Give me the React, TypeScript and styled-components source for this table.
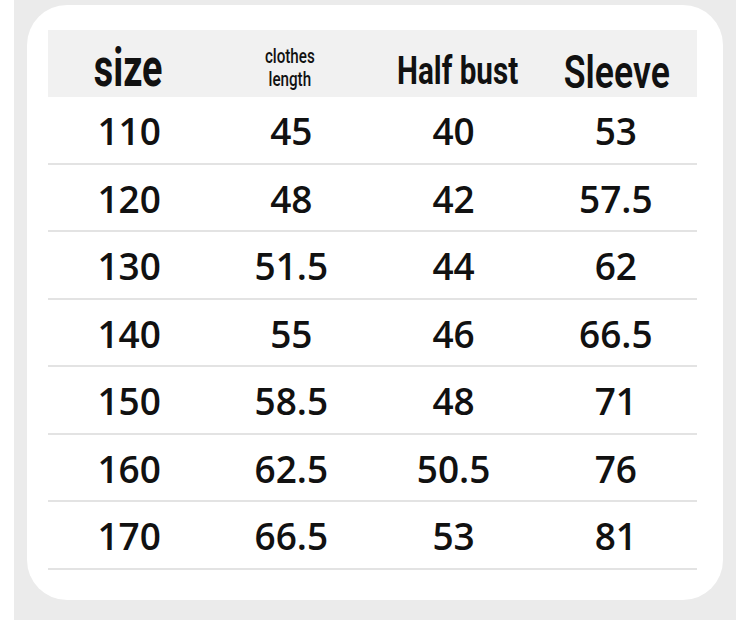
import React from "react";
import styled, { createGlobalStyle } from "styled-components";

const Global = createGlobalStyle`
  html, body { margin: 0; padding: 0; background: #ffffff; }
  #root { width: 750px; height: 620px; overflow: hidden; }
`;

const Page = styled.div`
  width: 750px;
  height: 620px;
  display: flex;
  background: #ffffff;
`;

const Backdrop = styled.div`
  margin-left: 14px;
  width: 722px;
  height: 620px;
  background: #ebebeb;
  display: flex;
  flex-direction: column;
`;

const Card = styled.div`
  margin: 5px 0 0 13px;
  width: 696px;
  height: 595px;
  background: #ffffff;
  border-radius: 40px;
  box-sizing: border-box;
  padding: 25px 0 0 21px;
`;

const Table = styled.div`
  width: 649px;
  display: flex;
  flex-direction: column;
`;

const HeaderRow = styled.div`
  height: 67px;
  background: #f1f1f1;
  display: grid;
  grid-template-columns: repeat(4, 1fr);
`;

const HeadCell = styled.div<{ $pb: number; $pl?: number }>`
  display: flex;
  align-items: flex-end;
  justify-content: center;
  padding-bottom: ${(p) => p.$pb}px;
  padding-left: ${(p) => p.$pl ?? 0}px;
  box-sizing: border-box;
  font-family: Roboto, "Liberation Sans", sans-serif;
  color: #111;
  overflow: visible;
`;

const HeadText = styled.span<{ $size: number; $sx: number; $weight: number }>`
  display: inline-block;
  font-size: ${(p) => p.$size}px;
  font-weight: ${(p) => p.$weight};
  line-height: 1;
  white-space: nowrap;
  transform: scaleX(${(p) => p.$sx});
  transform-origin: center bottom;
`;

const SmallHead = styled.span`
  display: inline-block;
  font-size: 20px;
  font-weight: 500;
  line-height: 23px;
  text-align: center;
  transform: scaleX(0.76);
  transform-origin: center bottom;
`;

const Row = styled.div`
  height: 67.5px;
  box-sizing: border-box;
  border-bottom: 2px solid #e3e3e3;
  display: grid;
  grid-template-columns: repeat(4, 1fr);
  align-items: center;
`;

const Cell = styled.div`
  text-align: center;
  font-family: "Open Sans", "Noto Sans", sans-serif;
  font-weight: 600;
  font-size: 37px;
  color: #111;
  line-height: 1;
  padding-top: 2px;
`;

const rows: string[][] = [
  ["110", "45", "40", "53"],
  ["120", "48", "42", "57.5"],
  ["130", "51.5", "44", "62"],
  ["140", "55", "46", "66.5"],
  ["150", "58.5", "48", "71"],
  ["160", "62.5", "50.5", "76"],
  ["170", "66.5", "53", "81"],
];

export default function App() {
  return (
    <Page>
      <Global />
      <Backdrop>
        <Card>
          <Table>
            <HeaderRow>
              <HeadCell $pb={2}>
                <HeadText $size={54} $sx={0.7} $weight={700}>size</HeadText>
              </HeadCell>
              <HeadCell $pb={6}>
                <SmallHead>
                  clothes
                  <br />
                  length
                </SmallHead>
              </HeadCell>
              <HeadCell $pb={7} $pl={10}>
                <HeadText $size={38} $sx={0.78} $weight={700}>Half bust</HeadText>
              </HeadCell>
              <HeadCell $pb={2}>
                <HeadText $size={47} $sx={0.76} $weight={600}>Sleeve</HeadText>
              </HeadCell>
            </HeaderRow>
            {rows.map((r) => (
              <Row key={r[0]}>
                {r.map((v, i) => (
                  <Cell key={i}>{v}</Cell>
                ))}
              </Row>
            ))}
          </Table>
        </Card>
      </Backdrop>
    </Page>
  );
}
